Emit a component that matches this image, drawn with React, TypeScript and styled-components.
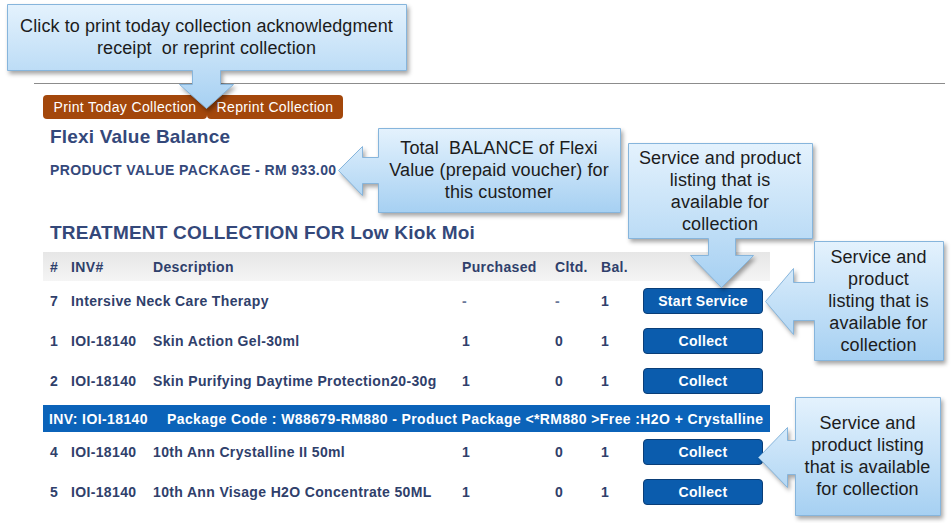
import styled, { createGlobalStyle } from "styled-components";

const GlobalStyle = createGlobalStyle`
	html, body {
		margin: 0;
		padding: 0;
		background: #ffffff;
	}
	* {
		box-sizing: border-box;
	}
`;

const Page = styled.div`
	position: relative;
	width: 951px;
	height: 523px;
	overflow: hidden;
	background: #ffffff;
	padding: 83px 0 0 34px;
	font-family: "Liberation Sans", Arial, sans-serif;
	color: #2f406b;
`;

const Divider = styled.div`
	width: 911px;
	height: 1px;
	background: #8c8c8c;
`;

const Content = styled.div`
	padding-left: 9px;
	width: 736px;
`;

const ActionBar = styled.div`
	display: flex;
	margin-top: 11px;
`;

const PrintButton = styled.button<{ $width: number }>`
	width: ${(p) => p.$width}px;
	height: 24px;
	border: none;
	border-radius: 4px;
	background: #a3470b;
	color: #ffffff;
	font-family: "Liberation Sans", Arial, sans-serif;
	font-size: 14px;
	letter-spacing: 0.35px;
	padding: 0;
	cursor: pointer;
`;

const Heading = styled.h2<{ $top: number }>`
	margin: ${(p) => p.$top}px 0 0 7px;
	font-size: 19px;
	line-height: 22px;
	font-weight: bold;
	letter-spacing: 0.2px;
	color: #34487a;
`;

const SubHeading = styled.div`
	margin: 14px 0 0 7px;
	font-size: 14px;
	line-height: 16px;
	font-weight: bold;
	letter-spacing: 0.4px;
	color: #34487a;
`;

const Row = styled.div<{ $head?: boolean }>`
	display: grid;
	grid-template-columns: 21px 82px 309px 93px 46px 42px 120px;
	align-items: center;
	padding-left: 7px;
	height: ${(p) => (p.$head ? 29 : 40)}px;
	margin-top: ${(p) => (p.$head ? 8 : 0)}px;
	background: ${(p) =>
		p.$head ? "linear-gradient(to bottom, #e6e6e6, #f5f5f5)" : "transparent"};
	font-size: 14px;
	font-weight: bold;
	letter-spacing: 0.35px;
	color: #2f406b;
`;

const Cell = styled.span<{ $span?: number; $muted?: boolean }>`
	grid-column: span ${(p) => p.$span ?? 1};
	white-space: nowrap;
	color: ${(p) => (p.$muted ? "#6a7898" : "inherit")};
`;

const CollectButton = styled.button`
	width: 120px;
	height: 26px;
	border: 1px solid #0a3e78;
	border-radius: 4px;
	background: #0b5cad;
	color: #ffffff;
	font-family: "Liberation Sans", Arial, sans-serif;
	font-size: 14px;
	font-weight: bold;
	letter-spacing: 0.3px;
	padding: 0;
	cursor: pointer;
`;

const PackageBar = styled.div`
	display: flex;
	align-items: center;
	height: 27px;
	margin-top: 4px;
	padding-left: 6px;
	background: #0b63b9;
	color: #ffffff;
	font-size: 14px;
	font-weight: bold;
	letter-spacing: 0.4px;
	white-space: nowrap;
`;

const PackageInv = styled.span`
	width: 118px;
`;

const CalloutWrap = styled.div<{ $x: number; $y: number; $w: number; $h: number }>`
	position: absolute;
	left: ${(p) => p.$x}px;
	top: ${(p) => p.$y}px;
	width: ${(p) => p.$w}px;
	height: ${(p) => p.$h}px;
	pointer-events: none;

	svg {
		position: absolute;
		inset: 0;
		overflow: visible;
		filter: drop-shadow(2px 3px 2px rgba(0, 0, 0, 0.35));
	}
`;

const CalloutText = styled.div<{ $x: number; $y: number; $w: number; $h: number }>`
	position: absolute;
	left: ${(p) => p.$x}px;
	top: ${(p) => p.$y}px;
	width: ${(p) => p.$w}px;
	height: ${(p) => p.$h}px;
	display: flex;
	align-items: center;
	justify-content: center;
	text-align: center;
	white-space: pre;
	font-family: "Liberation Sans", Arial, sans-serif;
	font-size: 18px;
	line-height: 22px;
	letter-spacing: 0.1px;
	color: #1c1c1c;
`;

type Rect = { x: number; y: number; w: number; h: number };

type CalloutProps = {
	id: string;
	bounds: Rect;
	box: Rect;
	path: string;
	lines: string[];
};

function Callout({ id, bounds, box, path, lines }: CalloutProps) {
	return (
		<CalloutWrap $x={bounds.x} $y={bounds.y} $w={bounds.w} $h={bounds.h}>
			<svg
				width={bounds.w}
				height={bounds.h}
				viewBox={`${bounds.x} ${bounds.y} ${bounds.w} ${bounds.h}`}
			>
				<defs>
					<linearGradient id={id} x1="0" y1="0" x2="0" y2="1">
						<stop offset="0" stopColor="#e4f2fd" />
						<stop offset="1" stopColor="#a6d0f2" />
					</linearGradient>
				</defs>
				<path d={path} fill={`url(#${id})`} stroke="#86b5dc" strokeWidth="1" />
			</svg>
			<CalloutText
				$x={box.x - bounds.x}
				$y={box.y - bounds.y}
				$w={box.w}
				$h={box.h}
			>
				<div>
					{lines.map((l, i) => (
						<div key={i}>{l}</div>
					))}
				</div>
			</CalloutText>
		</CalloutWrap>
	);
}

const callouts: CalloutProps[] = [
	{
		id: "cPrint",
		bounds: { x: 7, y: 4, w: 400, h: 105 },
		box: { x: 7, y: 4, w: 399, h: 66 },
		path: "M7.5,4.5 H406.5 V70.5 H220.5 V84.5 H233.5 L206.5,108.5 L179.5,84.5 H192.5 V70.5 H7.5 Z",
		lines: ["Click to print today collection acknowledgment", "receipt  or reprint collection"],
	},
	{
		id: "cBalance",
		bounds: { x: 338, y: 128, w: 283, h: 85 },
		box: { x: 378, y: 128, w: 242, h: 84 },
		path: "M378.5,128.5 H620.5 V212.5 H378.5 V183.5 H362.5 V195.5 L338.5,170.5 L362.5,146.5 V157.5 H378.5 Z",
		lines: ["Total  BALANCE of Flexi", "Value (prepaid voucher) for", "this customer"],
	},
	{
		id: "cListTop",
		bounds: { x: 628, y: 143, w: 185, h: 145 },
		box: { x: 628, y: 143, w: 184, h: 95 },
		path: "M628.5,143.5 H812.5 V238.5 H735.5 V255.5 H753.5 L721.5,287.5 L690.5,255.5 H708.5 V238.5 H628.5 Z",
		lines: ["Service and product", "listing that is", "available for", "collection"],
	},
	{
		id: "cListMid",
		bounds: { x: 765, y: 241, w: 179, h: 120 },
		box: { x: 814, y: 241, w: 129, h: 119 },
		path: "M814.5,241.5 H943.5 V360.5 H814.5 V320.5 H793.5 V334.5 L765.5,301.5 L793.5,268.5 V282.5 H814.5 Z",
		lines: ["Service and", "product", "listing that is", "available for", "collection"],
	},
	{
		id: "cListBottom",
		bounds: { x: 758, y: 397, w: 183, h: 119 },
		box: { x: 795, y: 397, w: 145, h: 118 },
		path: "M795.5,397.5 H940.5 V515.5 H795.5 V474.5 H787.5 V487.5 L758.5,457.5 L787.5,427.5 V440.5 H795.5 Z",
		lines: ["Service and", "product listing", "that is available", "for collection"],
	},
];

type Item = {
	no: string;
	inv?: string;
	desc: string;
	purchased: string;
	cltd: string;
	bal: string;
	action: string;
};

const topItems: Item[] = [
	{ no: "7", desc: "Intersive Neck Care Therapy", purchased: "-", cltd: "-", bal: "1", action: "Start Service" },
	{ no: "1", inv: "IOI-18140", desc: "Skin Action Gel-30ml", purchased: "1", cltd: "0", bal: "1", action: "Collect" },
	{ no: "2", inv: "IOI-18140", desc: "Skin Purifying Daytime Protection20-30g", purchased: "1", cltd: "0", bal: "1", action: "Collect" },
];

const packageItems: Item[] = [
	{ no: "4", inv: "IOI-18140", desc: "10th Ann Crystalline II 50ml", purchased: "1", cltd: "0", bal: "1", action: "Collect" },
	{ no: "5", inv: "IOI-18140", desc: "10th Ann Visage H2O Concentrate 50ML", purchased: "1", cltd: "0", bal: "1", action: "Collect" },
];

function ItemRow({ item }: { item: Item }) {
	return (
		<Row>
			<Cell>{item.no}</Cell>
			{item.inv ? (
				<>
					<Cell>{item.inv}</Cell>
					<Cell>{item.desc}</Cell>
				</>
			) : (
				<Cell $span={2}>{item.desc}</Cell>
			)}
			<Cell $muted={item.purchased === "-"}>{item.purchased}</Cell>
			<Cell $muted={item.cltd === "-"}>{item.cltd}</Cell>
			<Cell>{item.bal}</Cell>
			<CollectButton>{item.action}</CollectButton>
		</Row>
	);
}

export default function App() {
	return (
		<Page>
			<GlobalStyle />
			<Divider />
			<Content>
				<ActionBar>
					<PrintButton $width={164}>Print Today Collection</PrintButton>
					<PrintButton $width={136}>Reprint Collection</PrintButton>
				</ActionBar>
				<Heading $top={7}>Flexi Value Balance</Heading>
				<SubHeading>PRODUCT VALUE PACKAGE - RM 933.00</SubHeading>
				<Heading $top={44}>TREATMENT COLLECTION FOR Low Kiok Moi</Heading>
				<Row $head>
					<Cell>#</Cell>
					<Cell>INV#</Cell>
					<Cell>Description</Cell>
					<Cell>Purchased</Cell>
					<Cell>Cltd.</Cell>
					<Cell>Bal.</Cell>
				</Row>
				{topItems.map((it) => (
					<ItemRow key={it.no} item={it} />
				))}
				<PackageBar>
					<PackageInv>INV: IOI-18140</PackageInv>
					<span>Package Code : W88679-RM880 - Product Package &lt;*RM880 &gt;Free :H2O + Crystalline</span>
				</PackageBar>
				{packageItems.map((it) => (
					<ItemRow key={it.no} item={it} />
				))}
			</Content>
			{callouts.map((c) => (
				<Callout key={c.id} {...c} />
			))}
		</Page>
	);
}
